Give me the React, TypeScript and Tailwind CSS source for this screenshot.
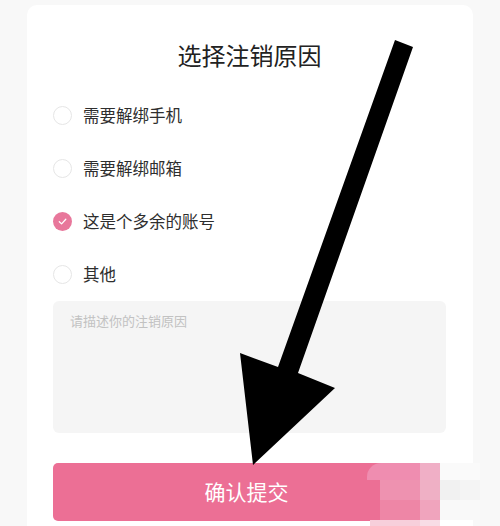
import { useState } from "react";

const reasons = ["需要解绑手机", "需要解绑邮箱", "这是个多余的账号", "其他"];

function Radio({ checked }: { checked: boolean }) {
  if (checked) {
    return (
      <span className="flex h-[19px] w-[19px] shrink-0 items-center justify-center rounded-full bg-[#e8779b]">
        <svg width="11" height="11" viewBox="0 0 12 12" fill="none">
          <path
            d="M2.5 6.2 5 8.6 9.6 3.6"
            stroke="#fff"
            strokeWidth="1.4"
            strokeLinecap="round"
            strokeLinejoin="round"
          />
        </svg>
      </span>
    );
  }
  return (
    <span className="h-[19px] w-[19px] shrink-0 rounded-full border border-[#e6e6e6] bg-white" />
  );
}

// 截图上的马赛克水印
const mosaic = [
  "left-[367px] top-[463px] w-[53px] h-[17px] bg-[#ef8db0] rounded-tl-[14px]",
  "left-[420px] top-[463px] w-[20px] h-[17px] bg-[#f0afc6]",
  "left-[440px] top-[463px] w-[40px] h-[17px] bg-[#fafafa]",
  "left-[380px] top-[480px] w-[40px] h-[20px] bg-[#ee92b0]",
  "left-[420px] top-[480px] w-[20px] h-[20px] bg-[#efb0c5]",
  "left-[440px] top-[480px] w-[20px] h-[20px] bg-[#f1f1f1]",
  "left-[460px] top-[480px] w-[20px] h-[20px] bg-[#f4f4f4]",
  "left-[380px] top-[500px] w-[40px] h-[20px] bg-[#ee86a6]",
  "left-[420px] top-[500px] w-[20px] h-[20px] bg-[#f0a4bd]",
  "left-[440px] top-[500px] w-[40px] h-[20px] bg-[#f9f9f9]",
  "left-[370px] top-[520px] w-[50px] h-[6px] bg-[#f7cfdb]",
  "left-[420px] top-[520px] w-[20px] h-[6px] bg-[#f8dde6]",
];

export default function App() {
  const [selected, setSelected] = useState(2);
  const [text, setText] = useState("");

  return (
    <div
      className="relative h-[526px] w-[500px] overflow-hidden bg-[#f8f8f8] pl-[27px] pr-[27px] pt-[5px]"
      style={{ fontFamily: '"Noto Sans CJK SC", "Noto Sans", sans-serif' }}
    >
      <div className="h-[600px] rounded-[10px] bg-white pl-[26px] pr-[27px] pt-[33px]">
        <h1 className="text-center text-[24px] leading-[34px] text-[#222]">
          选择注销原因
        </h1>

        <div className="mt-[17px] flex flex-col">
          {reasons.map((r, i) => (
            <button
              key={r}
              type="button"
              onClick={() => setSelected(i)}
              className="flex h-[53px] items-center gap-[11px] text-left"
            >
              <Radio checked={selected === i} />
              <span className="text-[16.5px] text-[#2e2e2e]">{r}</span>
            </button>
          ))}
        </div>

        <textarea
          value={text}
          onChange={(e) => setText(e.target.value)}
          placeholder="请描述你的注销原因"
          className="block h-[132px] w-full resize-none rounded-[6px] bg-[#f5f5f5] px-[17px] pt-[10px] text-[13px] leading-[20px] text-[#333] outline-none placeholder:text-[#c2c2c2]"
        />

        <button
          type="button"
          className="mt-[30px] flex h-[58px] w-[387px] items-center justify-center rounded-[5px] bg-[#ec6f95] text-[21px] text-white"
        >
          确认提交
        </button>
      </div>

      {mosaic.map((c) => (
        <div key={c} className={`absolute ${c}`} />
      ))}

      <svg
        className="pointer-events-none absolute left-0 top-0"
        width="500"
        height="526"
        viewBox="0 0 500 526"
      >
        <polygon
          points="395,40 413,47 298,373 335,388 253,465 240,353 278,367"
          fill="#000"
        />
      </svg>
    </div>
  );
}
